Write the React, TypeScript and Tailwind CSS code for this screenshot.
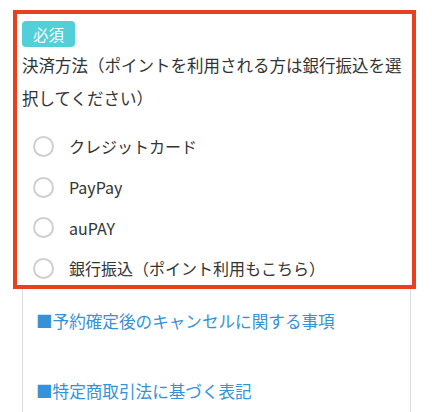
import React from "react";

const options = ["クレジットカード", "PayPay", "auPAY", "銀行振込（ポイント利用もこちら）"];

export default function App() {
  return (
    <div
      className="w-[432px] h-[412px] bg-white overflow-hidden text-[#333]"
      style={{ fontFamily: '"Noto Sans CJK JP", "Noto Sans", sans-serif' }}
    >
      <div className="pt-[10px]">
        <div className="ml-[13px] w-[403px] h-[279px] border-[4px] border-[#e8411e] pl-[5px] pt-[7px]">
          <div className="flex">
            <span className="h-[26px] px-[11px] rounded-[4px] bg-[#52cfd8] text-white text-[15.5px] leading-[26px]">
              必須
            </span>
          </div>
          <p className="mt-[2px] text-[16.5px] leading-[33px] pr-[4px]">
            決済方法（ポイントを利用される方は銀行振込を選択してください）
          </p>
          <div className="mt-[11px] flex flex-col">
            {options.map((o) => (
              <label key={o} className="h-[40.7px] flex items-center pl-[11px]">
                <span className="w-[21px] h-[21px] rounded-full border-2 border-[#cfcfcf] bg-white shrink-0" />
                <span className="ml-[15px] text-[16px] leading-none">{o}</span>
              </label>
            ))}
          </div>
        </div>
        <div className="ml-[22px] w-[389px] h-[200px] border-x border-[#dddddd] pl-[13px] text-[#3592d6] text-[16.6px] leading-none">
          <div className="pt-[24px]">■予約確定後のキャンセルに関する事項</div>
          <div className="mt-[53px]">■特定商取引法に基づく表記</div>
        </div>
      </div>
    </div>
  );
}
